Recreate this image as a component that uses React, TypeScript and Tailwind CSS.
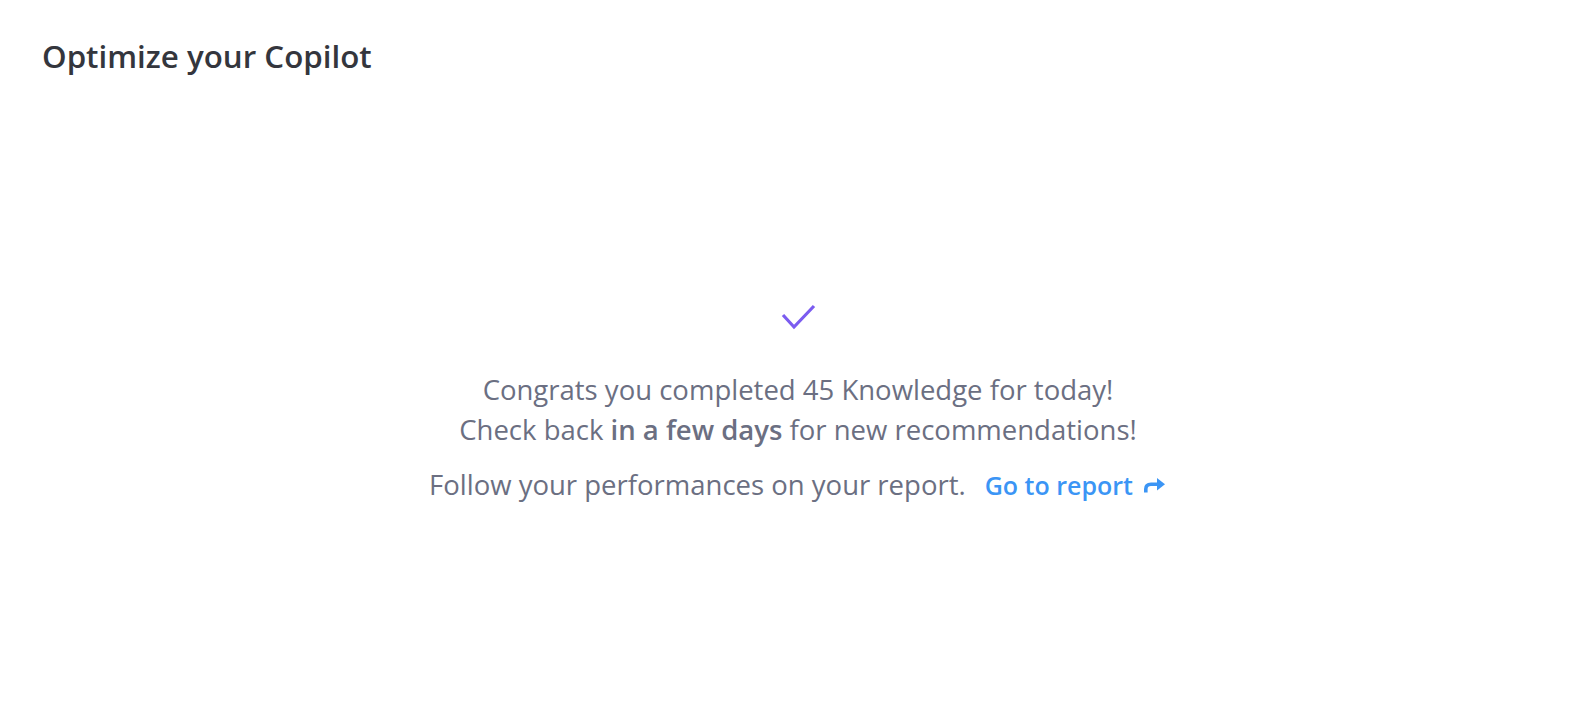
const App = () => {
  return (
    <div className="w-[1586px] h-[706px] bg-white overflow-hidden" style={{ fontFamily: '"Open Sans", sans-serif' }}>
      <div className="px-[42px] pt-[36px]">
        <h1 className="text-[31.3px] font-semibold text-[#34363d] leading-[40px]">Optimize your Copilot</h1>
      </div>
      <div className="flex flex-col items-center pt-[226px] pl-[10px]">
        <svg width="36" height="28" viewBox="0 0 36 28" fill="none" className="mb-[40px]">
          <path d="M3 13 L14 25 L34 4" stroke="#7b5cf0" strokeWidth="3.2" />
        </svg>
        <p className="text-[27.5px] leading-[40px] text-[#6b6f82] text-center">
          Congrats you completed 45 Knowledge for today!
          <br />
          Check back <span className="font-semibold">in a few days</span> for new recommendations!
        </p>
        <div className="mt-[15px] flex items-baseline text-[27.5px] leading-[40px]">
          <span className="text-[#6b6f82]">Follow your performances on your report.</span>
          <a className="ml-[19px] text-[25px] font-semibold text-[#3b95f5] flex items-center gap-[10px]">
            Go to report
            <svg width="24" height="16" viewBox="0 0 24 16" fill="none">
              <path d="M2.8 15.5 V12 C2.8 8.7 4.8 7.2 8 7.2 H19" stroke="#3b95f5" strokeWidth="3.6" />
              <path d="M14 1 L22 7.2 L14 13.4 Z" fill="#3b95f5" />
            </svg>
          </a>
        </div>
      </div>
    </div>
  );
};

export default App;
